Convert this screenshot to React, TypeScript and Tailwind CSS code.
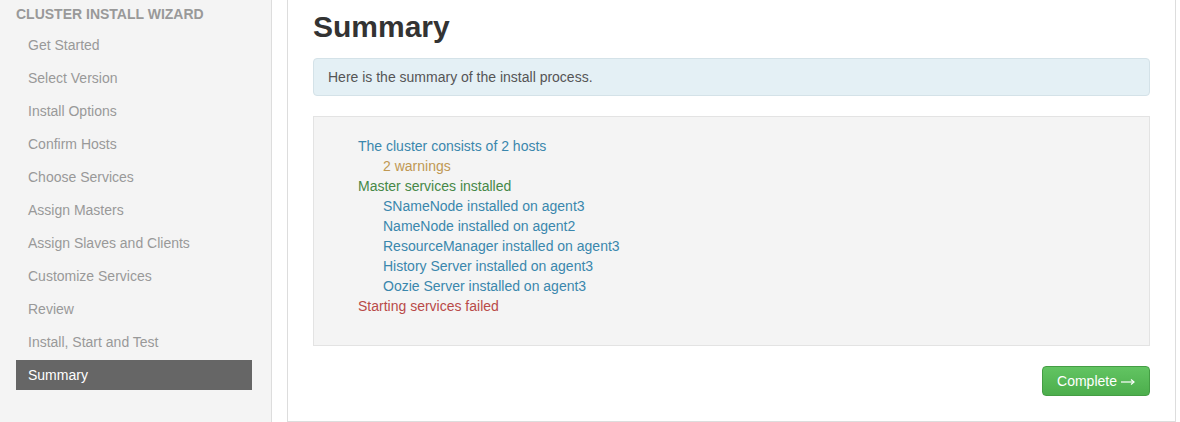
import React from "react";

const steps = [
  "Get Started",
  "Select Version",
  "Install Options",
  "Confirm Hosts",
  "Choose Services",
  "Assign Masters",
  "Assign Slaves and Clients",
  "Customize Services",
  "Review",
  "Install, Start and Test",
  "Summary",
];

export default function App() {
  return (
    <div
      className="flex h-[422px] w-[1180px] overflow-hidden bg-white text-[14px] leading-[20px]"
      style={{ fontFamily: '"Liberation Sans", Arial, sans-serif' }}
    >
      <aside className="w-[272px] shrink-0 border-r border-[#dddddd] bg-[#f4f4f4] pl-[16px] pr-[19px]">
        <div className="mt-[4px] h-[20px] font-bold text-[#999999]">CLUSTER INSTALL WIZARD</div>
        <ul className="mt-[6px] flex flex-col gap-[3px]">
          {steps.map((s) =>
            s === "Summary" ? (
              <li key={s} className="flex h-[30px] items-center bg-[#666666] pl-[12px] text-white">
                {s}
              </li>
            ) : (
              <li key={s} className="flex h-[30px] items-center pl-[12px] text-[#999999]">
                {s}
              </li>
            )
          )}
        </ul>
      </aside>
      <main className="ml-[15px] w-[889px] shrink-0 border-x border-b border-[#dddddd] px-[25px] pb-[24px] pt-[10px]">
        <h2 className="h-[33px] text-[30px] font-bold leading-[33px] text-[#333333]">Summary</h2>
        <div className="mt-[15px] rounded-[4px] border border-[#d4e2e8] bg-[#e4f0f5] px-[14px] py-[8px] text-[#555555]">
          Here is the summary of the install process.
        </div>
        <div className="mt-[20px] h-[230px] border border-[#e3e3e3] bg-[#f4f4f4] pl-[44px] pt-[19px]">
          <div className="text-[#3a87ad]">The cluster consists of 2 hosts</div>
          <div className="pl-[25px] text-[#c09853]">2 warnings</div>
          <div className="text-[#468847]">Master services installed</div>
          <div className="pl-[25px] text-[#3a87ad]">SNameNode installed on agent3</div>
          <div className="pl-[25px] text-[#3a87ad]">NameNode installed on agent2</div>
          <div className="pl-[25px] text-[#3a87ad]">ResourceManager installed on agent3</div>
          <div className="pl-[25px] text-[#3a87ad]">History Server installed on agent3</div>
          <div className="pl-[25px] text-[#3a87ad]">Oozie Server installed on agent3</div>
          <div className="text-[#b94a48]">Starting services failed</div>
        </div>
        <div className="mt-[20px] flex justify-end">
          <button className="flex h-[30px] w-[108px] items-center justify-center gap-[4px] rounded-[4px] border border-[#449d44] bg-gradient-to-b from-[#62c462] to-[#4cae4c] text-white">
            <span>Complete</span>
            <svg width="14" height="8" viewBox="0 0 14 8" className="mt-[2px]">
              <path d="M0 4H12.5" stroke="white" strokeWidth="1.2" />
              <path d="M10 1.5L13 4L10 6.5" fill="none" stroke="white" strokeWidth="1.2" />
            </svg>
          </button>
        </div>
      </main>
    </div>
  );
}
